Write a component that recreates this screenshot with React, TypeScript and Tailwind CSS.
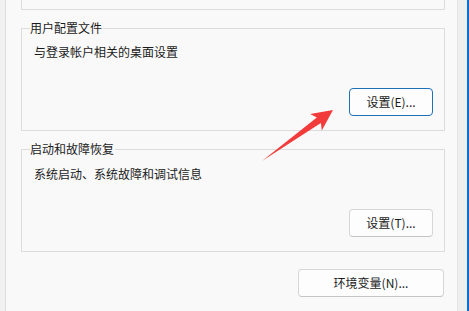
import React from 'react';

const font = { fontFamily: '"Noto Sans CJK SC", "Noto Sans", sans-serif' };

const Btn: React.FC<{ label: string; focused?: boolean; className?: string }> = ({ label, focused, className }) => (
  <button
    className={
      'h-[28px] rounded-[4px] bg-[#fdfdfd] text-[12px] leading-[16px] text-[#1b1b1b] ' +
      (focused ? 'border border-[#1f6fb8] ' : 'border border-[#d6d6d6] border-b-[#c4c4c4] ') +
      (className ?? '')
    }
  >
    {label}
  </button>
);

const Group: React.FC<{ title: string; desc: string; children: React.ReactNode; className?: string; descClass?: string }> = ({
  title,
  desc,
  children,
  className,
  descClass,
}) => (
  <fieldset className={'ml-[15px] w-[424px] border border-[#dcdcdc] px-[8px] pb-[14px] ' + (className ?? '')}>
    <legend className="text-[12px] leading-[16px] text-[#1b1b1b] pr-[1px]">{title}</legend>
    <p className={'ml-[4px] text-[12px] leading-[16px] text-[#1b1b1b] ' + (descClass ?? '')}>{desc}</p>
    {children}
  </fieldset>
);

export default function App() {
  return (
    <div className="relative flex h-[311px] w-[469px] overflow-hidden bg-[#f9f9f9]" style={font}>
      {/* left edge */}
      <div className="w-[5px] bg-[#f1f1f1]" />
      <div className="w-[1px] bg-[#dedede]" />

      {/* main content */}
      <div className="flex-1">
        {/* tail of the group above */}
        <div className="ml-[15px] h-[10px] w-[424px] border-x border-b border-[#dcdcdc]" />

        <Group title="用户配置文件" desc="与登录帐户相关的桌面设置" className="mt-[10px]" descClass="mt-[8px]">
          <div className="mt-[28px] flex justify-end pr-[3px]">
            <Btn label="设置(E)..." focused className="w-[84px]" />
          </div>
        </Group>

        <Group title="启动和故障恢复" desc="系统启动、系统故障和调试信息" className="mt-[10px]" descClass="mt-[9px]">
          <div className="mt-[27px] flex justify-end pr-[3px]">
            <Btn label="设置(T)..." className="w-[84px]" />
          </div>
        </Group>

        <div className="ml-[15px] mt-[17px] flex w-[424px] justify-end pr-[1px]">
          <Btn label="环境变量(N)..." className="w-[146px]" />
        </div>
      </div>

      {/* right edge */}
      <div className="w-[1px] bg-[#e4e4e4]" />
      <div className="w-[9px] bg-[#eeeeee]" />
      <div className="w-[2px] bg-[#0a6fd0]" />

      {/* annotation arrow */}
      <svg className="pointer-events-none absolute left-0 top-0" width="469" height="311" viewBox="0 0 469 311">
        <polygon
          points="262,161 320.9,123 321.8,130.4 333,110 310.2,114.1 316.8,117.4"
          fill="#f23c3c"
        />
      </svg>
    </div>
  );
}
